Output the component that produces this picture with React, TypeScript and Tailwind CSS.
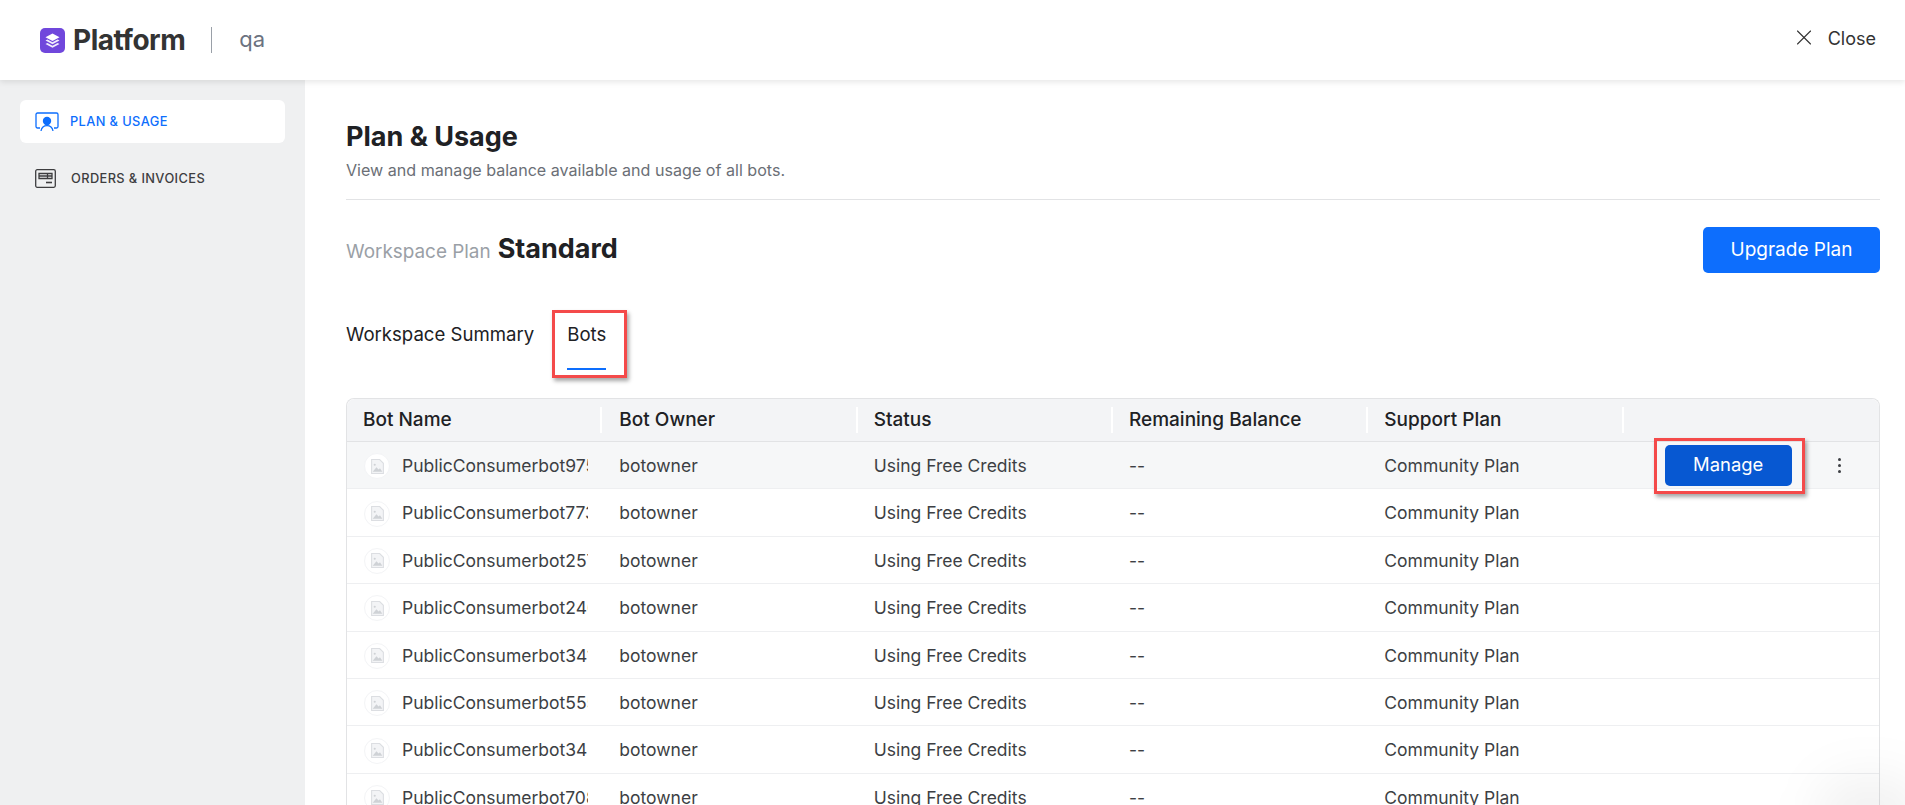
import { FC } from "react";
import { X } from "lucide-react";

const bots = ["975", "773", "257", "246", "341", "555", "342", "708"];

const columns = ["Bot Name", "Bot Owner", "Status", "Remaining Balance", "Support Plan", ""];

const LogoMark: FC = () => (
  <svg width="25" height="25" viewBox="0 0 25 25" className="shrink-0">
    <rect width="25" height="25" rx="5" fill="#7047dc" />
    <path d="M12.5 5.5 19.5 9.2 12.5 12.9 5.5 9.2Z" fill="#fff" />
    <path d="M7.4 11.6 5.5 12.6 12.5 16.3 19.5 12.6 17.6 11.6 12.5 14.3Z" fill="#fff" opacity="0.9" />
    <path d="M7.4 15 5.5 16 12.5 19.7 19.5 16 17.6 15 12.5 17.7Z" fill="#fff" opacity="0.9" />
  </svg>
);

const PlanIcon: FC = () => (
  <svg width="24" height="20" viewBox="0 0 24 20" fill="none" stroke="#0d6efd" strokeWidth="1.3" className="shrink-0">
    <path d="M5 16H2.5A1.5 1.5 0 0 1 1 14.5V2.5A1.5 1.5 0 0 1 2.5 1h19A1.5 1.5 0 0 1 23 2.5v12a1.5 1.5 0 0 1-1.5 1.5H19" />
    <circle cx="12" cy="9" r="4.2" fill="#0d6efd" stroke="none" />
    <path d="M6 19c.6-3.4 2.8-5.4 6-5.4s5.4 2 6 5.4" />
  </svg>
);

const OrdersIcon: FC = () => (
  <svg width="21" height="19" viewBox="0 0 21 19" fill="none" stroke="#3d3d3f" strokeWidth="1.3" className="shrink-0">
    <rect x="0.7" y="0.7" width="19.6" height="17.6" rx="1.5" />
    <path d="M4 4.5h13v5H4ZM12.5 4.5v5M4 7h13" />
    <path d="M11 13.5h6" strokeWidth="1.6" />
  </svg>
);

const ImagePlaceholder: FC = () => (
  <div className="w-[26px] h-[26px] rounded-full bg-white border border-[#f3f4f6] flex items-center justify-center shrink-0">
    <svg width="13" height="15" viewBox="0 0 12 14" fill="none">
      <path d="M.5 .5h7.5l3.5 3.5v9.5H.5Z" fill="#f3f4f6" stroke="#dcdee2" />
      <circle cx="3.4" cy="5.4" r="1" fill="#cfd2d6" />
      <path d="M1.5 12 5 7.8l2 2 1.3-1.2 2.2 3.4Z" fill="#cfd2d6" />
    </svg>
  </div>
);

const App: FC = () => {
  return (
    <div className="relative h-[805px] overflow-hidden bg-white font-['Inter',sans-serif] text-[#202124]">
      <header className="relative z-10 h-[80px] bg-white shadow-[0_2px_6px_rgba(0,0,0,0.1)] flex items-center pl-[40px] pr-[29px]">
        <LogoMark />
        <span className="ml-[8px] text-[28px] font-bold tracking-[-0.5px] text-[#333]">Platform</span>
        <div className="ml-[26px] w-px h-[26px] bg-[#9aa0a8]" />
        <span className="ml-[27px] text-[22px] text-[#6b7280] -translate-y-[1px]">qa</span>
        <div className="ml-auto flex items-center gap-[11px] text-[18px] text-[#333] -translate-y-[2.5px]">
          <X size={26} strokeWidth={1} />
          <span>Close</span>
        </div>
      </header>

      <div className="flex h-[725px]">
        <aside className="w-[305px] shrink-0 bg-[#eff0f1] pt-[20px] px-[20px]">
          <div className="h-[43px] rounded-[6px] bg-white flex items-center pl-[15px] gap-[11px] text-[12.8px] font-medium tracking-[0.4px] text-[#0d6efd]">
            <PlanIcon />
            <span className="pt-[1px]">PLAN &amp; USAGE</span>
          </div>
          <div className="h-[43px] mt-[14px] flex items-center pl-[15px] gap-[15px] text-[12.8px] font-medium tracking-[0.4px] text-[#3d3d3f]">
            <OrdersIcon />
            <span>ORDERS &amp; INVOICES</span>
          </div>
        </aside>

        <main className="flex-1 min-w-0 pl-[41px] pr-[25px] pt-[39px]">
          <h1 className="text-[27px] leading-[36px] font-bold">Plan &amp; Usage</h1>
          <p className="mt-[5px] text-[16.1px] leading-[20px] text-[#6b6f76]">
            View and manage balance available and usage of all bots.
          </p>
          <div className="mt-[19px] border-t border-[#e2e3e5]" />

          <div className="mt-[27px] flex items-center justify-between h-[46px]">
            <div className="flex items-baseline gap-[7px] -translate-y-[1px]">
              <span className="text-[18.9px] text-[#9aa0a6]">Workspace Plan</span>
              <span className="text-[27px] font-bold">Standard</span>
            </div>
            <button className="w-[177px] h-[46px] rounded-[5px] bg-[#0d6efd] text-white text-[19px]">Upgrade Plan</button>
          </div>

          <div className="mt-[48px] flex gap-[33px] text-[18.6px] leading-[26px]">
            <div className="h-[65px]">Workspace Summary</div>
            <div className="relative h-[65px]">
              Bots
              <div className="absolute left-0 right-0 bottom-[16px] h-[2px] bg-[#0d6efd]" />
              <div className="absolute -left-[15px] -right-[21px] -top-[11px] h-[68px] border-[3px] border-[#f44a4a] shadow-[2px_3px_4px_rgba(0,0,0,0.35)]" />
            </div>
          </div>

          <div className="mt-[12px] rounded-t-[8px] border border-b-0 border-[#e2e3e5]">
            <div className="grid grid-cols-6 h-[43px] items-center bg-[#f3f4f6] rounded-t-[8px] border-b border-[#e2e3e5] text-[19px] font-medium">
              {columns.map((col, i) => (
                <div key={i} className={`relative truncate ${i === 1 ? "pl-[17px]" : "pl-[16px]"}`}>
                  {col}
                  {i < 5 && <div className="absolute right-0 top-[1px] bottom-[1px] w-[2px] bg-white" />}
                </div>
              ))}
            </div>
            {bots.map((id, i) => (
              <div
                key={id}
                className={`grid grid-cols-6 h-[47.4px] items-center border-b border-[#eeeff1] text-[17.5px] text-[#3d3f44] ${i === 0 ? "bg-[#f6f7f8]" : "bg-white"}`}
              >
                <div className="flex items-center pt-[2px] pl-[17px] pr-[14px] gap-[12px] min-w-0">
                  <ImagePlaceholder />
                  <span className="overflow-hidden whitespace-nowrap">{`PublicConsumerbot${id}1482`}</span>
                </div>
                <div className="pt-[2px] pl-[17px]">botowner</div>
                <div className="pt-[2px] pl-[16px]">Using Free Credits</div>
                <div className="pt-[2px] pl-[16px]">--</div>
                <div className="pt-[2px] pl-[16px]">Community Plan</div>
                <div className="relative flex items-center h-full pl-[41px]">
                  {i === 0 && (
                    <>
                      <div className="relative">
                        <button className="w-[127px] h-[41px] rounded-[5px] bg-[#0758d2] text-white text-[18.4px]">Manage</button>
                        <div className="absolute -left-[11px] -right-[13px] -top-[7px] -bottom-[8px] border-[3px] border-[#f44a4a] shadow-[2px_3px_4px_rgba(0,0,0,0.35)]" />
                      </div>
                      <div className="ml-[46px] flex flex-col gap-[3px]">
                        <span className="w-[3px] h-[3px] rounded-full bg-[#3d3f44]" />
                        <span className="w-[3px] h-[3px] rounded-full bg-[#3d3f44]" />
                        <span className="w-[3px] h-[3px] rounded-full bg-[#3d3f44]" />
                      </div>
                    </>
                  )}
                </div>
              </div>
            ))}
          </div>
        </main>
      </div>
      <div className="absolute -right-[20px] -bottom-[50px] w-[110px] h-[80px] rounded-full bg-black/5 blur-xl" />
    </div>
  );
};

export default App;
